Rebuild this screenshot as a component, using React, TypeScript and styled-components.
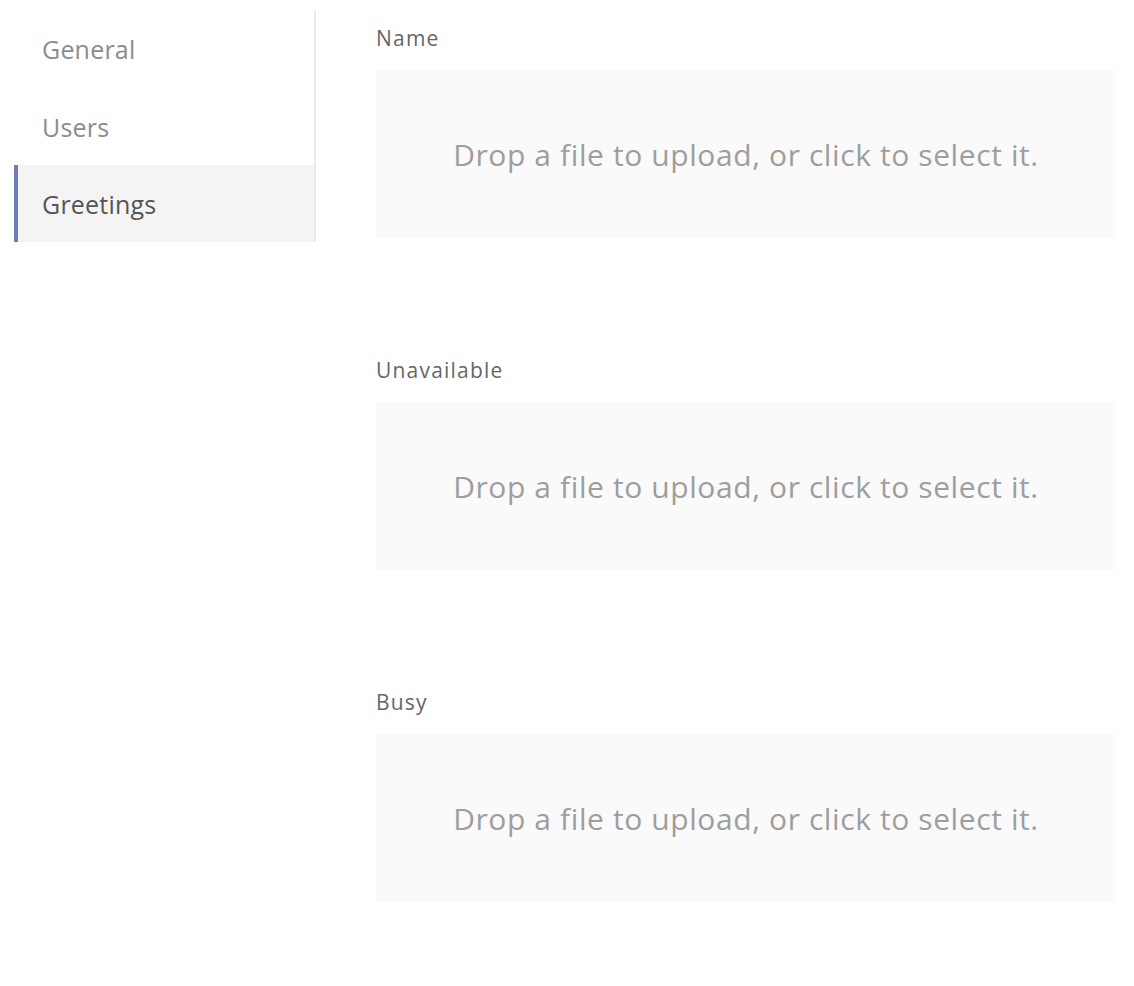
import React from "react";
import styled, { createGlobalStyle } from "styled-components";

const Global = createGlobalStyle`
  html, body { margin: 0; padding: 0; background: #ffffff; }
  body { font-family: "Open Sans", Lato, sans-serif; }
`;

const Page = styled.div`
  display: flex;
  align-items: flex-start;
  padding: 10px 18px 0 14px;
`;

const Sidebar = styled.nav`
  width: 300px;
  flex: none;
  border-right: 2px solid #ebebeb;
  display: flex;
  flex-direction: column;
`;

const NavItem = styled.div<{ $active?: boolean }>`
  height: 77px;
  display: flex;
  align-items: center;
  padding-left: 24px;
  border-left: 4px solid ${(p) => (p.$active ? "#6f7db4" : "transparent")};
  background: ${(p) => (p.$active ? "#f4f4f4" : "transparent")};
  color: ${(p) => (p.$active ? "#555555" : "#8c8c8c")};
  font-size: 25px;
  letter-spacing: 0.2px;

  &:first-child {
    height: 78px;
  }
`;

const Content = styled.main`
  flex: 1;
  margin-left: 60px;
  display: flex;
  flex-direction: column;
`;

const Section = styled.section`
  display: flex;
  flex-direction: column;
  margin-top: 16px;
  margin-bottom: 104px;
`;

const Label = styled.div`
  font-size: 21px;
  line-height: 24px;
  letter-spacing: 1.2px;
  color: #666666;
  margin-bottom: 20px;
`;

const DropZone = styled.div`
  height: 168px;
  background: #fafafa;
  display: flex;
  align-items: center;
  justify-content: center;
  color: #9e9e9e;
  font-size: 30px;
  letter-spacing: 0.6px;
  cursor: pointer;
`;

const items = ["General", "Users", "Greetings"];
const sections = ["Name", "Unavailable", "Busy"];

export default function App() {
  return (
    <>
      <Global />
      <Page>
        <Sidebar>
          {items.map((t) => (
            <NavItem key={t} $active={t === "Greetings"}>
              {t}
            </NavItem>
          ))}
        </Sidebar>
        <Content>
          {sections.map((s) => (
            <Section key={s}>
              <Label>{s}</Label>
              <DropZone>Drop a file to upload, or click to select it.</DropZone>
            </Section>
          ))}
        </Content>
      </Page>
    </>
  );
}
